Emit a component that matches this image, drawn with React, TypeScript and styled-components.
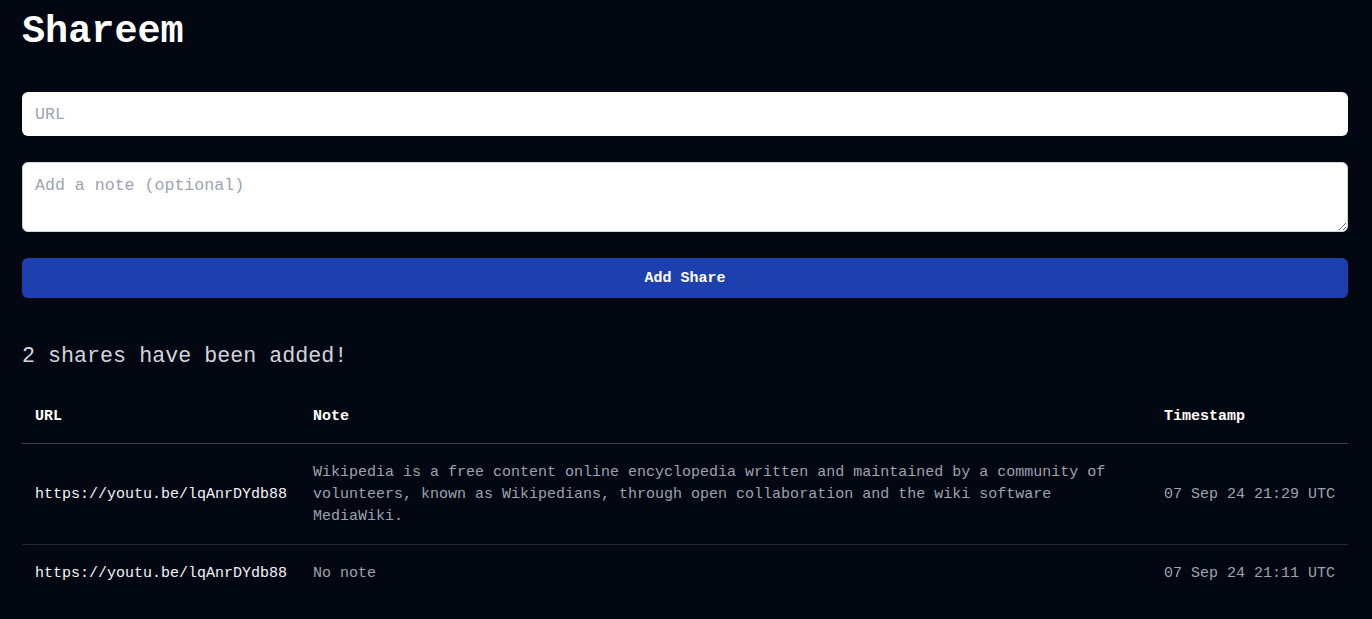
import React from "react";
import styled, { createGlobalStyle } from "styled-components";

const GlobalStyle = createGlobalStyle`
  html, body {
    margin: 0;
    padding: 0;
    background: #030712;
  }
  body {
    font-family: "Liberation Mono", "DejaVu Sans Mono", monospace;
    color: #f9fafb;
  }
  * { box-sizing: border-box; }
`;

const Page = styled.main`
  padding: 11px 24px 20px 22px;
  min-height: 619px;
  background: #030712;
`;

const Title = styled.h1`
  margin: 0;
  font-size: 38.5px;
  line-height: 43px;
  font-weight: 700;
  color: #ffffff;
`;

const Form = styled.form`
  display: flex;
  flex-direction: column;
  gap: 26px;
  margin-top: 38px;
`;

const fieldBase = `
  width: 100%;
  display: block;
  font-family: "Liberation Mono", "DejaVu Sans Mono", monospace;
  font-size: 16.6px;
  color: #111827;
  background: #ffffff;
  border-radius: 6px;
  outline: none;
  &::placeholder { color: #9ca3af; }
`;

const UrlInput = styled.input`
  ${fieldBase}
  height: 44px;
  padding: 1px 13px 0;
  border: none;
`;

const NoteArea = styled.textarea`
  ${fieldBase}
  height: 70px;
  padding: 10px 12px;
  border: 1px solid #d1d5db;
  line-height: 26px;
  resize: vertical;
`;

const SubmitButton = styled.button`
  height: 40px;
  width: 100%;
  border: none;
  border-radius: 6px;
  background: #1e40af;
  color: #ffffff;
  font-family: "Liberation Mono", "DejaVu Sans Mono", monospace;
  font-size: 15px;
  font-weight: 700;
  padding: 1px 0 0;
  cursor: pointer;
`;

const Count = styled.h2`
  margin: 44px 0 0;
  font-size: 21.7px;
  line-height: 30px;
  font-weight: 400;
  color: #d1d5db;
`;

const Table = styled.table`
  width: 100%;
  margin-top: 18px;
  border-collapse: collapse;
  font-size: 15px;
  line-height: 22px;
`;

const HeadCell = styled.th`
  text-align: left;
  font-weight: 700;
  color: #ffffff;
  padding: 16px 13px 15px;
  white-space: nowrap;
  border-bottom: 1px solid #374151;
`;

const Row = styled.tr<{ $last?: boolean }>`
  border-bottom: ${(p) => (p.$last ? "none" : "1px solid #1f2937")};
`;

const Cell = styled.td<{ $tone: "bright" | "muted"; $grow?: boolean }>`
  padding: 18px 13px 16px;
  vertical-align: middle;
  color: ${(p) => (p.$tone === "bright" ? "#f3f4f6" : "#9ca3af")};
  white-space: ${(p) => (p.$grow ? "normal" : "nowrap")};
  width: ${(p) => (p.$grow ? "100%" : "auto")};
`;

const shares = [
  {
    url: "https://youtu.be/lqAnrDYdb88",
    note: "Wikipedia is a free content online encyclopedia written and maintained by a community of volunteers, known as Wikipedians, through open collaboration and the wiki software MediaWiki.",
    time: "07 Sep 24 21:29 UTC",
  },
  {
    url: "https://youtu.be/lqAnrDYdb88",
    note: "No note",
    time: "07 Sep 24 21:11 UTC",
  },
];

export default function App() {
  return (
    <>
      <GlobalStyle />
      <Page>
        <Title>Shareem</Title>
        <Form onSubmit={(e) => e.preventDefault()}>
          <UrlInput type="text" placeholder="URL" />
          <NoteArea placeholder="Add a note (optional)" />
          <SubmitButton type="submit">Add Share</SubmitButton>
        </Form>
        <Count>{shares.length} shares have been added!</Count>
        <Table>
          <thead>
            <tr>
              <HeadCell>URL</HeadCell>
              <HeadCell>Note</HeadCell>
              <HeadCell>Timestamp</HeadCell>
            </tr>
          </thead>
          <tbody>
            {shares.map((s, i) => (
              <Row key={i} $last={i === shares.length - 1}>
                <Cell $tone="bright">{s.url}</Cell>
                <Cell $tone="muted" $grow>
                  {s.note}
                </Cell>
                <Cell $tone="muted">{s.time}</Cell>
              </Row>
            ))}
          </tbody>
        </Table>
      </Page>
    </>
  );
}
